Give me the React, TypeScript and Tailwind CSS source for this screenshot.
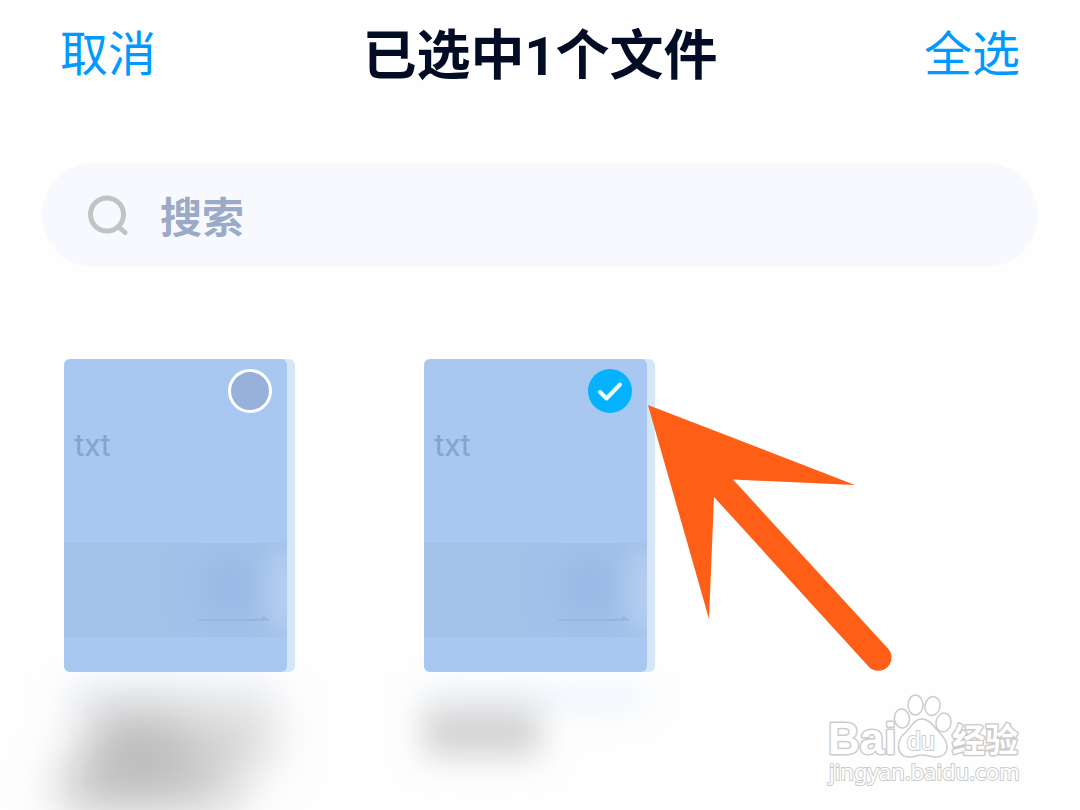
import { useState } from "react";

type FileItem = { id: string; kind: string; lines: "double" | "single" };

const FILES: FileItem[] = [
  { id: "file-1", kind: "txt", lines: "double" },
  { id: "file-2", kind: "txt", lines: "single" },
];

function SearchIcon() {
  return (
    <svg className="size-10 shrink-0" viewBox="0 0 40 40" fill="none" stroke="#c2c3c3" aria-hidden="true">
      <circle cx="19" cy="19.500" r="16.500" strokeWidth="5" />
      <path d="M31 32L37 37.500" strokeWidth="5" strokeLinecap="round" />
    </svg>
  );
}

function Caption({ lines }: { lines: FileItem["lines"] }) {
  if (lines === "double") {
    return (
      <div className="flex h-[138px] flex-col pt-4" aria-hidden="true">
        <div className="h-5 w-[210px] bg-[#edf2fc] blur-lg" />
        <div className="flex flex-col blur-xl">
          <div className="ml-6 flex h-14">
            <div className="w-24 bg-[#bebebe]" />
            <div className="w-22 bg-[#d4d4d4]" />
          </div>
          <div className="flex h-12">
            <div className="w-32 bg-[#bebebe]" />
            <div className="w-12 bg-[#cecece]" />
          </div>
        </div>
      </div>
    );
  }
  return (
    <div className="flex h-[138px] flex-col pt-4" aria-hidden="true">
      <div className="h-5 w-[220px] bg-[#ecf2fc] blur-lg" />
      <div className="h-12 w-[116px] bg-[#d2d2d2] blur-lg" />
    </div>
  );
}

function Arrow() {
  return (
    <svg
      className="pointer-events-none absolute top-[46px] left-[224px] h-[267px] w-[245px]"
      viewBox="0 0 245 267"
      fill="#ff5e17"
      aria-hidden="true"
    >
      <path d="M0 0L207 80L85 74.500L239.500 243A13 13 0 0 1 221 262L66 92L61 214Z" />
    </svg>
  );
}

function FileCard({
  file,
  checked,
  onToggle,
  pointed,
}: {
  file: FileItem;
  checked: boolean;
  onToggle: () => void;
  pointed: boolean;
}) {
  return (
    <li className="pl-16">
      <label className="relative z-10 block h-[313px] w-[231px] rounded-md bg-[#d5e7f7]">
        <span className="relative block h-full w-[223px] overflow-hidden rounded-md bg-[#a8c8f1]">
          <span className="absolute inset-x-0 top-[184px] block h-[94px] overflow-hidden bg-[#a2c2ea]">
            <span className="absolute top-3 left-[136px] block h-16 w-14 rounded-full bg-[#98b9e5] blur-lg" />
            <span className="absolute top-2 -right-3 block h-20 w-7 rounded-full bg-[#b9d0f2] blur-md" />
            <svg
              className="absolute top-[70px] left-[135px] h-2 w-[72px]"
              viewBox="0 0 72 8"
              fill="#91b0da"
              aria-hidden="true"
            >
              <path d="M0 6H62L65 3L71 8H0Z" opacity=".7" />
            </svg>
          </span>
          <span className="absolute top-[66px] left-[10px] font-['Roboto',sans-serif] text-[32px] leading-10 text-[#87a4cc]">
            {file.kind}
          </span>
        </span>
        <span className="absolute top-[10px] right-[23px] block size-11">
          <input
            type="checkbox"
            aria-label={file.kind}
            checked={checked}
            onChange={onToggle}
            className="block size-full appearance-none rounded-full border-[3px] border-white bg-[#97b1da] checked:border-0 checked:bg-[#05b2ff]"
          />
          {checked && (
            <svg
              className="pointer-events-none absolute inset-0 size-full"
              viewBox="0 0 44 44"
              fill="none"
              stroke="#eaffff"
              strokeWidth="4"
              strokeLinecap="round"
              strokeLinejoin="round"
              aria-hidden="true"
            >
              <path d="M12 23L18.500 29.500L32 15.500" />
            </svg>
          )}
        </span>
        {pointed && <Arrow />}
      </label>
      <Caption lines={file.lines} />
    </li>
  );
}

function BaiduMark() {
  return (
    <svg
      className="pointer-events-none absolute right-[50px] bottom-[20px] h-[105px] w-[210px]"
      viewBox="820 685 210 105"
      fill="#ffffff"
      stroke="#cccccc"
      role="img"
      aria-label="Baidu 经验"
    >
      <g strokeWidth="1.500">
        <path d="M922 719C914 719 911 727 906 732C901 736 898 740 898.500 747C899 754 904 757 910 757C915 757 917 755 922 755C928 755 930 757 936 757C943 757 947 753 947 747C947 741 943 736 939 732C934 727 930 719 922 719Z" />
        <ellipse cx="902" cy="718.500" rx="7.500" ry="9.500" transform="rotate(-8 902 718.500)" />
        <ellipse cx="915.500" cy="705" rx="7.500" ry="10" />
        <ellipse cx="932.500" cy="706" rx="7.500" ry="9.500" transform="rotate(12 932.500 706)" />
        <ellipse cx="943.500" cy="722.500" rx="7.500" ry="9.500" transform="rotate(10 943.500 722.500)" />
      </g>
      <g strokeWidth="3" strokeLinejoin="round" paintOrder="stroke" fontWeight="700">
        <text x="828" y="754" fontSize="44" fontFamily="Liberation Sans, sans-serif">
          Bai
        </text>
        <text x="952" y="752" fontSize="33" fontFamily="Noto Sans CJK SC, sans-serif">
          经验
        </text>
      </g>
      <text
        x="907"
        y="750"
        fontSize="25"
        strokeWidth="2"
        paintOrder="stroke"
        fontFamily="Liberation Sans, sans-serif"
      >
        du
      </text>
      <text
        x="829"
        y="780"
        fontSize="22"
        fontFamily="Noto Sans, sans-serif"
        strokeWidth="2"
        paintOrder="stroke"
      >
        jingyan.baidu.com
      </text>
    </svg>
  );
}

export default function App() {
  const [selected, setSelected] = useState<string[]>(["file-2"]);

  const toggle = (id: string) =>
    setSelected((ids) => (ids.includes(id) ? ids.filter((x) => x !== id) : [...ids, id]));

  return (
    <div className="relative min-h-screen overflow-hidden bg-[#fefefe] font-['Noto_Sans_CJK_SC',sans-serif]">
      <header className="flex h-[108px] items-center justify-between px-[60px]">
        <button
          type="button"
          className="pb-2 text-5xl leading-[56px] text-[#0099ff]"
          onClick={() => setSelected([])}
        >
          取消
        </button>
        <h1 className="text-[54px] leading-[60px] font-bold text-[#020c24]">
          已选中<span className="font-['Roboto',sans-serif]">{selected.length}</span>个文件
        </h1>
        <button
          type="button"
          className="pb-2 text-5xl leading-[56px] text-[#0099ff]"
          onClick={() => setSelected(FILES.map((f) => f.id))}
        >
          全选
        </button>
      </header>

      <main>
        <label className="mx-[42px] mt-[55px] flex h-[104px] items-center gap-8 rounded-full bg-[#f7f9fe] px-[46px]">
          <SearchIcon />
          <input
            type="search"
            aria-label="搜索"
            placeholder="搜索"
            className="min-w-0 flex-1 bg-transparent text-[42px] leading-[60px] font-bold outline-none placeholder:text-[#9baac6]"
          />
        </label>

        <ul className="mt-[92px] grid grid-cols-3">
          {FILES.map((file, index) => (
            <FileCard
              key={file.id}
              file={file}
              checked={selected.includes(file.id)}
              onToggle={() => toggle(file.id)}
              pointed={index === 1}
            />
          ))}
        </ul>
      </main>

      <BaiduMark />
    </div>
  );
}
